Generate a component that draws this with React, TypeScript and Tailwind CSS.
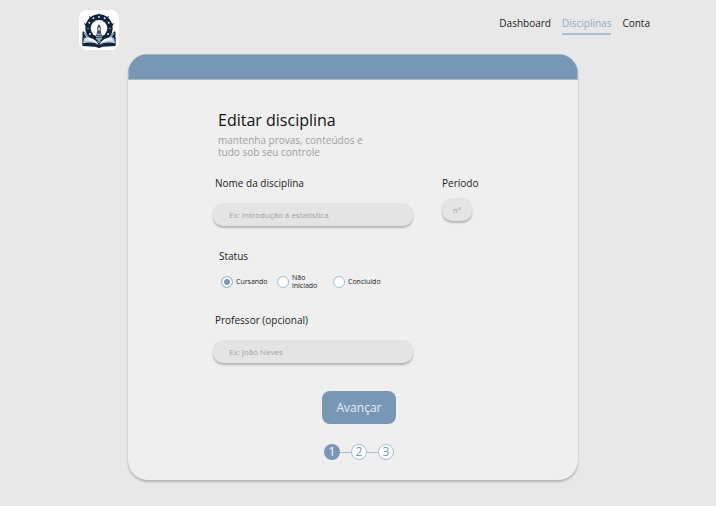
import { useState } from "react";

function Logo() {
  return (
    <svg viewBox="0 0 120 120" className="size-10 rounded-lg bg-white" role="img" aria-label="Logo">
      <g fill="#10233b">
        <path d="M60 9l4 9h-8zM60 9l3 8h-6zM30 17l10 7-6 5zM90 17l-10 7 6 5zM14 40l11 2-3 8zM106 40l-11 2 3 8z" />
        <circle cx="60" cy="54" r="41" />
        <path d="M12 63c8 6 14 11 15 20l9 5-6 14-16-12c-4-10-5-19-2-27zM108 63c-8 6-14 11-15 20l-9 5 6 14 16-12c4-10 5-19 2-27z" />
        <path d="M10 82l24 2 26 14 26-14 24-2v26l-38 2-12 4-12-4-38-2z" />
      </g>
      <circle cx="60" cy="55" r="25" fill="#fff" />
      <g fill="#d5e2ee">
        <circle cx="60" cy="21" r="3" />
        <circle cx="43" cy="25" r="3" />
        <circle cx="77" cy="25" r="3" />
        <circle cx="31" cy="38" r="3" />
        <circle cx="89" cy="38" r="3" />
        <circle cx="27" cy="55" r="2" />
        <circle cx="93" cy="55" r="2" />
        <circle cx="33" cy="72" r="3" />
        <circle cx="87" cy="72" r="3" />
      </g>
      <path d="M60 42c6 8 6 12 5 19l2 10H53l2-10c-1-7-1-11 5-19z" fill="#3d4f63" />
      <path d="M60 50c3 6 3 8 0 13-3-5-3-7 0-13z" fill="#fff" />
      <path d="M51 72h18v15l-9 8-9-8z" fill="#8ba3b9" />
      <path d="M51 76h18M51 82h18" stroke="#10233b" strokeWidth="2" />
      <path d="M15 69c6 4 8 9 8 15M105 69c-6 4-8 9-8 15" fill="none" stroke="#9eb8ce" strokeWidth="4" />
      <path d="M15 83c18-1 34 6 44 22-14-8-28-9-47-5z" fill="#b5cde3" />
      <path d="M105 83c-18-1-34 6-44 22 14-8 28-9 47-5z" fill="#b5cde3" />
      <path d="M24 82c15 1 27 8 35 22-11-10-23-13-40-12zM96 82c-15 1-27 8-35 22 11-10 23-13 40-12z" fill="#f2f7fb" />
    </svg>
  );
}

const links = ["Dashboard", "Disciplinas", "Conta"];
const statuses = [
  { id: "cursando", label: "Cursando" },
  { id: "nao-iniciado", label: "Não iniciado" },
  { id: "concluido", label: "Concluído" },
];
const field =
  "block h-[23px] rounded-[10px] bg-[#e4e4e4] text-[8px] text-[#444] shadow-[0_2px_2px_#b5b5b5] outline-none placeholder:text-[#a3a3a3]";

export default function App() {
  const [status, setStatus] = useState("cursando");

  return (
    <div className="min-h-screen bg-[#e8e8e8] pb-6 font-['Open_Sans',sans-serif] text-[#222]">
      <header className="flex items-start justify-between pt-[10px] pr-[66px] pb-1 pl-[79px]">
        <Logo />
        <nav className="flex gap-[11px] pt-[5px] text-[10px] leading-4">
          {links.map((link) => (
            <a
              key={link}
              href="#"
              className={
                link === "Disciplinas"
                  ? "border-b-2 border-[#a9bfd2] pb-[2px] text-[#8fabc4]"
                  : "pb-1"
              }
            >
              {link}
            </a>
          ))}
        </nav>
      </header>

      <main className="pr-[10px]">
        <form
          className="mx-auto max-w-[450px] overflow-hidden rounded-[20px] bg-[#efefef] shadow-[0_2px_2px_#b5b5b5,0_0_1px_#bbb]"
          onSubmit={(e) => e.preventDefault()}
        >
          <div className="h-[26px] border border-[#a3bacd] bg-[#7897b4]" />
          <div className="px-[85px] pt-[30px] pb-5">
            <div className="pl-[5px]">
              <h1 className="text-[16px] leading-5 text-[#111]">Editar disciplina</h1>
              <p className="mt-1 w-[160px] text-[10px] leading-3 text-[#a0a0a0]">
                mantenha provas, conteúdos e tudo sob seu controle
              </p>
            </div>

            <div className="mt-[17px] flex justify-between pr-[21px] text-[10px] leading-4">
              <div className="w-[200px]">
                <label htmlFor="nome" className="block pl-[2px]">
                  Nome da disciplina
                </label>
                <input id="nome" placeholder="Ex: Introdução à estatística" className={`${field} mt-3 w-full px-4`} />
              </div>
              <div className="w-[30px]">
                <label htmlFor="periodo" className="block">
                  Período
                </label>
                <input id="periodo" placeholder="nº" className={`${field} mt-[7px] w-full text-center`} />
              </div>
            </div>

            <fieldset className="mt-[22px] pl-[6px]">
              <legend className="text-[10px] leading-4">Status</legend>
              <div className="mt-[10px] flex h-4 items-center pl-[2px] text-[7px] leading-2">
                {statuses.map(({ id, label }) => (
                  <label key={id} className="flex w-14 items-center gap-[3px]">
                    <input
                      type="radio"
                      name="status"
                      checked={status === id}
                      onChange={() => setStatus(id)}
                      className="size-3 shrink-0 appearance-none rounded-full border border-[#a3bdd4] bg-white checked:bg-[#7897b4] checked:shadow-[inset_0_0_0_2px_white]"
                    />
                    <span className={id === "nao-iniciado" ? "w-7" : ""}>{label}</span>
                  </label>
                ))}
              </div>
            </fieldset>

            <div className="mt-[22px] w-[200px]">
              <label htmlFor="professor" className="block pl-[2px] text-[10px] leading-4">
                Professor (opcional)
              </label>
              <input id="professor" placeholder="Ex: João Neves" className={`${field} mt-3 w-full px-4`} />
            </div>

            <div className="mt-7 flex flex-col items-center gap-5 pl-3">
              <button
                type="submit"
                className="h-[33px] w-[74px] rounded-lg bg-[#7897b4] text-[12px] text-[#e6edf4]"
              >
                Avançar
              </button>
              <ol className="flex items-center text-[12px] leading-none text-[#7897b4]">
                <li className="grid size-4 place-items-center rounded-full bg-[#7897b4] text-white">1</li>
                <li aria-hidden="true" className="h-px w-[11px] bg-[#a3bdd4]" />
                <li className="grid size-4 place-items-center rounded-full border border-[#a3bdd4] bg-white">2</li>
                <li aria-hidden="true" className="h-px w-[11px] bg-[#a3bdd4]" />
                <li className="grid size-4 place-items-center rounded-full border border-[#a3bdd4] bg-white">3</li>
              </ol>
            </div>
          </div>
        </form>
      </main>
    </div>
  );
}
